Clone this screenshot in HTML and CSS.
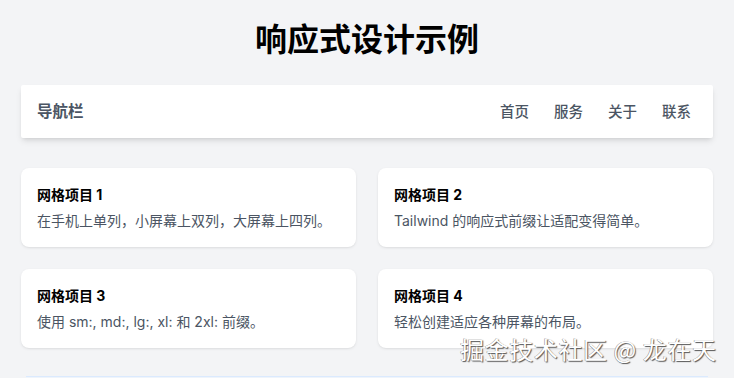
FILE: index.html
```html
<!DOCTYPE html>
<html lang="zh-CN">
<head>
  <meta charset="UTF-8" />
  <title>响应式设计示例</title>
  <link rel="stylesheet" href="styles.css">
</head>
<body>
  <h1 class="page-title">响应式设计示例</h1>

  <nav class="navbar">
    <div class="brand">导航栏</div>
    <div class="nav-links">
      <a href="#">首页</a>
      <a href="#">服务</a>
      <a href="#">关于</a>
      <a href="#">联系</a>
    </div>
  </nav>

  <div class="grid">
    <div class="card">
      <h2>网格项目 1</h2>
      <p>在手机上单列，小屏幕上双列，大屏幕上四列。</p>
    </div>
    <div class="card">
      <h2>网格项目 2</h2>
      <p>Tailwind 的响应式前缀让适配变得简单。</p>
    </div>
    <div class="card">
      <h2>网格项目 3</h2>
      <p>使用 sm:, md:, lg:, xl: 和 2xl: 前缀。</p>
    </div>
    <div class="card">
      <h2>网格项目 4</h2>
      <p>轻松创建适应各种屏幕的布局。</p>
    </div>
  </div>

  <div class="next-box"></div>

  <div class="watermark">掘金技术社区 @ 龙在天</div>
</body>
</html>
```

FILE: styles.css
```css
body {
  margin: 0;
  padding: 20px 21px 0;
  background: #f3f4f6;
  font-family: Inter, "Noto Sans CJK SC", sans-serif;
  color: #111;
  height: 378px;
  box-sizing: border-box;
  overflow: hidden;
}

.page-title {
  margin: 0 0 25px;
  text-align: center;
  font-size: 32px;
  line-height: 40px;
  font-weight: 700;
  color: #000;
}

.navbar {
  display: flex;
  justify-content: space-between;
  align-items: center;
  background: #fff;
  padding: 16px;
  border-radius: 2px;
  box-shadow: 0 4px 6px -1px rgba(0, 0, 0, 0.1), 0 2px 4px -2px rgba(0, 0, 0, 0.1);
}

.brand {
  font-size: 15.5px;
  line-height: 21px;
  font-weight: 700;
  color: #4b5563;
}

.nav-links {
  display: flex;
  gap: 25px;
  padding-right: 6px;
}

.nav-links a {
  font-size: 14.5px;
  line-height: 21px;
  color: #4b5563;
  text-decoration: none;
  font-weight: 500;
}

.grid {
  display: grid;
  grid-template-columns: 1fr 1fr;
  gap: 22px;
  margin-top: 30px;
}

.card {
  background: #fff;
  border-radius: 8px;
  padding: 16px;
  box-shadow: 0 1px 3px 0 rgba(0, 0, 0, 0.08), 0 1px 2px -1px rgba(0, 0, 0, 0.08);
}

.card h2 {
  margin: 0 0 6px;
  font-size: 14px;
  line-height: 21px;
  font-weight: 700;
  color: #000;
}

.card p {
  margin: 0;
  font-size: 14px;
  line-height: 20px;
  color: #4b5563;
}

.next-box {
  margin: 28px 5px 0;
  height: 1px;
  border-top: 1px solid #dbeafe;
  background: #eff4fb;
}

.watermark {
  position: absolute;
  left: 460px;
  top: 333px;
  font-family: "Noto Sans CJK SC", sans-serif;
  font-size: 24px;
  line-height: 32px;
  color: #fff;
  letter-spacing: 0.6px;
  text-shadow: 1px 1px 1px #555, -0.5px -0.5px 0 #888;
}
```
